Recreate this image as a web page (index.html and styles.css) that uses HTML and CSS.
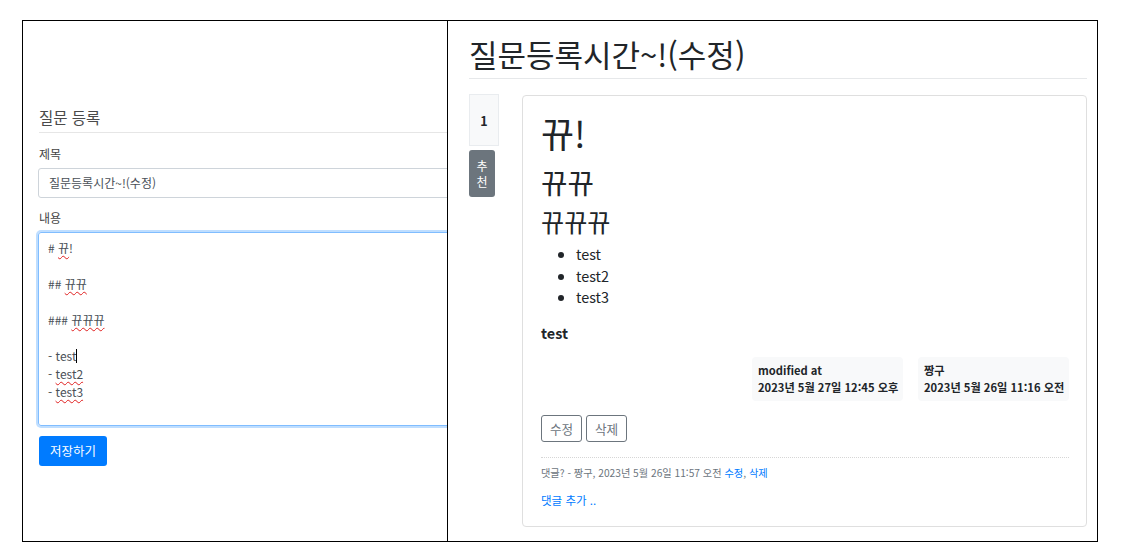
FILE: index.html
```html
<!DOCTYPE html>
<html lang="ko">
<head>
<meta charset="utf-8">
<title>질문 등록</title>
<link rel="stylesheet" href="styles.css">
</head>
<body>
<div class="frame">
  <div class="cell cell-left">
    <div class="form">
      <h5 class="form-title">질문 등록</h5>
      <div class="label">제목</div>
      <div class="input">질문등록시간~!(수정)</div>
      <div class="label label-content">내용</div>
      <div class="textarea">
        <div class="tline"># <span class="spell">뀨</span>!</div>
        <div class="tline">&nbsp;</div>
        <div class="tline">## <span class="spell">뀨뀨</span></div>
        <div class="tline">&nbsp;</div>
        <div class="tline">### <span class="spell">뀨뀨뀨</span></div>
        <div class="tline">&nbsp;</div>
        <div class="tline">- test<span class="caret"></span></div>
        <div class="tline">- <span class="spell">test2</span></div>
        <div class="tline">- <span class="spell">test3</span></div>
      </div>
      <div class="btn-primary">저장하기</div>
    </div>
  </div>
  <div class="cell cell-right">
    <h2 class="q-title">질문등록시간~!(수정)</h2>
    <div class="q-row">
      <div class="vote">
        <div class="vote-count">1</div>
        <div class="vote-btn">추<br>천</div>
      </div>
      <div class="card">
        <h1 class="md-h1">뀨!</h1>
        <h2 class="md-h2">뀨뀨</h2>
        <h3 class="md-h3">뀨뀨뀨</h3>
        <ul class="md-list">
          <li>test</li>
          <li>test2</li>
          <li>test3</li>
        </ul>
        <p class="md-p"><strong>test</strong></p>
        <div class="meta-row">
          <div class="meta-box">
            <div>modified at</div>
            <div>2023년 5월 27일 12:45 오후</div>
          </div>
          <div class="meta-box">
            <div>짱구</div>
            <div>2023년 5월 26일 11:16 오전</div>
          </div>
        </div>
        <div class="actions">
          <span class="btn-outline">수정</span>
          <span class="btn-outline">삭제</span>
        </div>
        <div class="comment">
          댓글? - 짱구, 2023년 5월 26일 11:57 오전 <a class="link">수정</a>, <a class="link">삭제</a>
        </div>
        <div class="add-comment"><a class="link">댓글 추가 ..</a></div>
      </div>
    </div>
  </div>
</div>
</body>
</html>
```

FILE: styles.css
```css
* { box-sizing: border-box; }

body {
  margin: 0;
  background: #fff;
  font-family: "Noto Sans CJK KR", "Noto Sans", sans-serif;
  color: #212529;
}

.frame {
  margin: 20px 0 0 22px;
  width: 1076px;
  height: 522px;
  border: 1px solid #000;
  display: flex;
}

.cell { height: 100%; overflow: hidden; }

.cell-left {
  width: 425px;
  flex: none;
  border-right: 1px solid #000;
}

.cell-right {
  flex: 1;
  padding: 16px 10px 0 21px;
}

/* ---------- left form ---------- */
.form {
  width: 560px;
  padding: 86px 0 0 16px;
  font-size: 12px;
}

.form-title {
  margin: 0;
  font-size: 15.5px;
  line-height: 20px;
  font-weight: 400;
  color: #4a4a4a;
  padding-bottom: 5px;
  border-bottom: 1px solid #e6e6e6;
}

.label {
  margin-top: 12px;
  line-height: 18px;
  color: #444;
  font-weight: 400;
}

.label-content { margin-top: 11px; }

.input {
  margin-top: 5px;
  margin-left: -1px;
  height: 30px;
  line-height: 28px;
  padding: 0 10px;
  border: 1px solid #ced4da;
  border-radius: 3px;
  color: #495057;
}

.textarea {
  margin-top: 5px;
  margin-left: -1px;
  height: 194px;
  padding: 6px 9px;
  border: 1px solid #80bdff;
  border-radius: 3px;
  box-shadow: 0 0 0 2px rgba(0, 123, 255, .25);
  color: #495057;
}

.tline { line-height: 18px; height: 18px; white-space: pre; }

.spell {
  text-decoration: underline wavy #e02020;
  text-decoration-thickness: 1px;
  text-underline-offset: 2px;
}

.caret {
  display: inline-block;
  width: 1px;
  height: 14px;
  background: #000;
  vertical-align: -2px;
}

.btn-primary {
  margin-top: 10px;
  width: 68px;
  height: 30px;
  line-height: 30px;
  text-align: center;
  background: #007bff;
  color: #fff;
  border-radius: 3px;
  font-size: 12.5px;
}

/* ---------- right detail ---------- */
.q-title {
  margin: 0;
  font-size: 31px;
  line-height: 34px;
  font-weight: 400;
  padding-bottom: 7px;
  border-bottom: 1px solid #e6e8ea;
}

.q-row {
  display: flex;
  margin-top: 16px;
}

.vote {
  width: 53px;
  flex: none;
  margin-top: -1px;
}

.vote-count {
  width: 30px;
  height: 52px;
  line-height: 52px;
  text-align: center;
  background: #f8f9fa;
  border: 1px solid #e9ecef;
  font-size: 12.5px;
  font-weight: 700;
}

.vote-btn {
  margin-top: 4px;
  width: 26px;
  height: 47px;
  padding-top: 8px;
  background: #6c757d;
  color: #fff;
  border-radius: 3px;
  font-size: 12px;
  line-height: 15.5px;
  text-align: center;
}

.card {
  flex: 1;
  height: 432px;
  border: 1px solid #dfdfdf;
  border-radius: 4px;
  padding: 15px 17px 0 18px;
  font-size: 14.4px;
}

.md-h1, .md-h2, .md-h3 { margin: 0; font-weight: 400; }
.md-h1 { font-size: 36px; line-height: 43px; margin-bottom: 10px; }
.md-h2 { font-size: 28.8px; line-height: 35px; margin-bottom: 7px; }
.md-h3 { font-size: 25.2px; line-height: 30px; margin-bottom: 7px; }

.md-list {
  margin: 0 0 14px;
  padding-left: 35px;
  line-height: 21.6px;
}

.md-p {
  margin: 0 0 14px;
  line-height: 21.6px;
}

.meta-row {
  display: flex;
  justify-content: flex-end;
  gap: 15px;
}

.meta-box {
  width: 151px;
  height: 44px;
  padding: 5px 6px;
  background: #f8f9fa;
  border-radius: 4px;
  font-size: 11.2px;
  font-weight: 600;
  line-height: 17px;
  white-space: nowrap;
}

.actions {
  margin-top: 14px;
  display: flex;
  gap: 4px;
}

.btn-outline {
  width: 41px;
  height: 27px;
  line-height: 25px;
  text-align: center;
  border: 1px solid #6c757d;
  border-radius: 3px;
  color: #6c757d;
  font-size: 12.6px;
}

.comment {
  margin-top: 15px;
  border-top: 1px dotted #d6d6d6;
  padding-top: 7px;
  font-size: 10.2px;
  line-height: 16px;
  color: #6c757d;
}

.link { color: #007bff; text-decoration: none; }

.add-comment {
  margin-top: 10px;
  font-size: 11.5px;
  line-height: 18px;
}
```
